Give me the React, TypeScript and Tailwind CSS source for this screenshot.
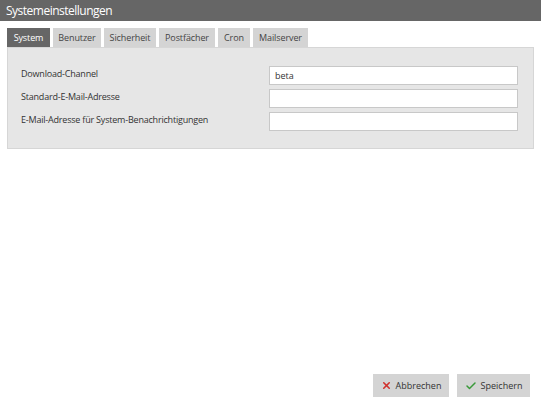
import { X, Check } from "lucide-react";

const tabs = [
  { name: "System", w: "w-[43px]" },
  { name: "Benutzer", w: "w-[48px]" },
  { name: "Sicherheit", w: "w-[52px]" },
  { name: "Postfächer", w: "w-[56px]" },
  { name: "Cron", w: "w-[32px]" },
  { name: "Mailserver", w: "w-[55px]" },
];

const fields = [
  { label: "Download-Channel", value: "beta" },
  { label: "Standard-E-Mail-Adresse", value: "" },
  { label: "E-Mail-Adresse für System-Benachrichtigungen", value: "" },
];

export default function App() {
  return (
    <div className="flex h-[406px] w-[541px] flex-col bg-white font-['Open_Sans',sans-serif] text-[#333]">
      <div className="flex h-[21px] items-center bg-[#666666] px-[6px] text-[12px] tracking-[-0.5px] text-white">
        Systemeinstellungen
      </div>
      <div className="mt-[7px] flex gap-[3px] px-[7px]">
        {tabs.map((t, i) => (
          <div
            key={t.name}
            className={
              (i === 0 ? "bg-[#666666] text-white" : "bg-[#d4d4d4] text-[#444]") +
              " flex h-[19px] items-center justify-center text-[9px] tracking-[-0.1px] " +
              t.w
            }
          >
            {t.name}
          </div>
        ))}
      </div>
      <div className="mx-[7px] flex h-[102px] flex-col gap-[4px] border border-[#d6d6d6] bg-[#e6e6e6] pt-[18px] pr-[15px] pl-[13px]">
        {fields.map((f) => (
          <div key={f.label} className="flex items-start justify-between">
            <span className="pt-[1px] text-[9px] tracking-[-0.2px] text-[#333]">{f.label}</span>
            <input
              readOnly
              value={f.value}
              className="h-[19px] w-[249px] border border-[#c8c8c8] bg-white px-[5px] text-[9px] text-[#333] outline-none"
            />
          </div>
        ))}
      </div>
      <div className="mt-auto mb-[9px] flex justify-end gap-[8px] pr-[11px]">
        <button className="flex h-[23px] w-[76px] items-center justify-center gap-[4px] bg-[#d4d4d4] text-[9px] text-[#333]">
          <X size={11} strokeWidth={3.5} className="text-[#d0312d]" />
          Abbrechen
        </button>
        <button className="flex h-[23px] w-[73px] items-center justify-center gap-[4px] bg-[#d4d4d4] text-[9px] text-[#333]">
          <Check size={12} strokeWidth={3} className="text-[#3a9a3a]" />
          Speichern
        </button>
      </div>
    </div>
  );
}
